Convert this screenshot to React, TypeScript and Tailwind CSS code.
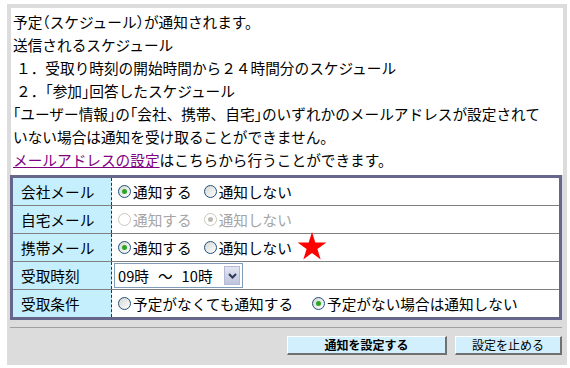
import React from 'react';

// brackets are narrow in the reference font, so set them half-width
function Jp({ text }: { text: string }) {
  const parts = text.split(/([「」（）])/);
  return (
    <>
      {parts.map((p, i) =>
        /[「」（）]/.test(p) ? (
          <span key={i} className="[font-feature-settings:'halt']">{p}</span>
        ) : (
          <React.Fragment key={i}>{p}</React.Fragment>
        )
      )}
    </>
  );
}

function Radio({ checked, disabled }: { checked?: boolean; disabled?: boolean }) {
  return (
    <span
      className={`inline-flex h-[13px] w-[13px] shrink-0 items-center justify-center rounded-full border ${
        disabled ? 'border-[#cac8bb] bg-white' : 'border-[#1c5180] bg-linear-to-br from-[#d6d6d0] to-white'
      }`}
    >
      {checked && (
        <span className={`h-[5px] w-[5px] rounded-full ${disabled ? 'bg-[#bdbab0]' : 'bg-[#2aa52a]'}`} />
      )}
    </span>
  );
}

function Option({ label, checked, disabled, className = '' }: {
  label: string;
  checked?: boolean;
  disabled?: boolean;
  className?: string;
}) {
  return (
    <span className={`flex items-center ${disabled ? 'text-[#a5a5a5]' : 'text-black'} ${className}`}>
      <Radio checked={checked} disabled={disabled} />
      <span className="ml-[2px]">{label}</span>
    </span>
  );
}

function Row({ label, last, children }: { label: string; last?: boolean; children: React.ReactNode }) {
  return (
    <div className={`flex ${last ? 'h-[27px]' : 'h-[28px] border-b border-[#808080]'}`}>
      <div className="flex w-[99px] items-center border-r border-dashed border-[#333] bg-[#c6effd] pl-[8px]">
        {label}
      </div>
      <div className="flex flex-1 items-center pl-[6px]">{children}</div>
    </div>
  );
}

export default function App() {
  return (
    <div className="relative h-[368px] w-[570px] overflow-hidden bg-white font-['Noto_Sans_CJK_JP',sans-serif] text-[14.67px] text-black">
      <div className="ml-[7px] mt-[4px] w-[560px] bg-[#dcdcdc] pl-[3px] pr-[5px] pt-[4px]">
        <div className="ml-px w-[552px] whitespace-nowrap bg-white pb-[4.5px] pl-[2px] pt-[1.5px] leading-[23px]">
          <div><Jp text="予定（スケジュール）が通知されます。" /></div>
          <div>送信されるスケジュール</div>
          <div className="pl-[3px]">１．受取り時刻の開始時間から２４時間分のスケジュール</div>
          <div className="pl-[3px]"><Jp text="２．「参加」回答したスケジュール" /></div>
          <div><Jp text="「ユーザー情報」の「会社、携帯、自宅」のいずれかのメールアドレスが設定されて" /></div>
          <div>いない場合は通知を受け取ることができません。</div>
          <div>
            <a href="#" className="text-[#800080] underline">メールアドレスの設定</a>
            はこちらから行うことができます。
          </div>
        </div>

        <div className="w-[552px] border-[3px] border-[#66668a] bg-white">
          <Row label="会社メール">
            <Option label="通知する" checked />
            <Option label="通知しない" className="ml-[12px]" />
          </Row>
          <Row label="自宅メール">
            <Option label="通知する" disabled />
            <Option label="通知しない" checked disabled className="ml-[12px]" />
          </Row>
          <Row label="携帯メール">
            <Option label="通知する" checked />
            <Option label="通知しない" className="ml-[12px]" />
          </Row>
          <Row label="受取時刻">
            <div className="-ml-[4px] flex h-[25px] w-[129px] items-center border border-[#7f9db9] bg-white">
              <span className="flex flex-1 items-center pl-[3px]">
                <span>09時</span>
                <span className="mx-[9px]">～</span>
                <span>10時</span>
              </span>
              <span className="mr-[2px] flex h-[19px] w-[16px] items-center justify-center border border-[#b4bbd8] bg-linear-to-b from-[#e4e6f2] to-[#bfc3dc]">
                <svg width="9" height="6" viewBox="0 0 9 6">
                  <path d="M1 1 L4.5 4.5 L8 1" fill="none" stroke="#2c3a5c" strokeWidth="2" />
                </svg>
              </span>
            </div>
          </Row>
          <Row label="受取条件" last>
            <Option label="予定がなくても通知する" />
            <Option label="予定がない場合は通知しない" checked className="ml-[19px]" />
          </Row>
        </div>

        <div className="mt-[7px] flex justify-end gap-[8px] border-t border-[#a0a0a0] pb-[10px] pt-[8px]">
          <button className="h-[19px] w-[160px] border-b-2 border-l border-r-2 border-t border-b-[#707070] border-l-white border-r-[#707070] border-t-white bg-[#d2effd] text-[12px] font-bold leading-none">
            通知を設定する
          </button>
          <button className="h-[19px] w-[107px] border-b-2 border-l border-r-2 border-t border-b-[#707070] border-l-white border-r-[#707070] border-t-white bg-[#d2effd] text-[12px] leading-none">
            設定を止める
          </button>
        </div>
      </div>

      <svg className="absolute left-[297px] top-[231px]" width="30" height="30" viewBox="0 0 100 100">
        <polygon points="50,3 61,38 98,38 68,60 79,95 50,73 21,95 32,60 2,38 39,38" fill="#ff0000" />
      </svg>
    </div>
  );
}
